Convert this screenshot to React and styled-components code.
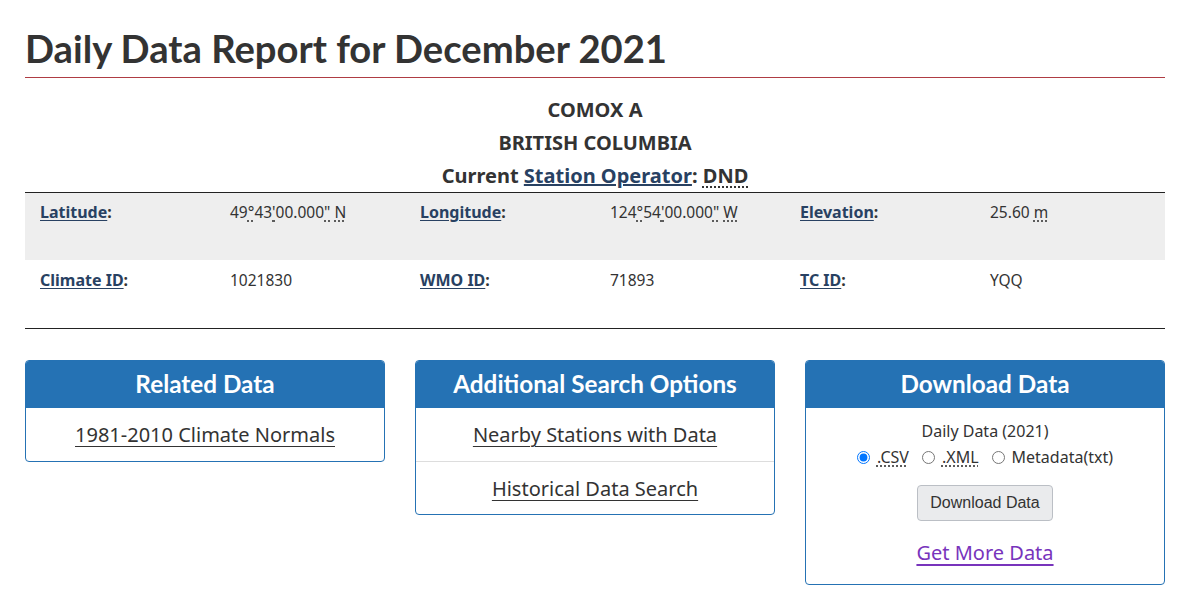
import React from "react";
import styled, { createGlobalStyle } from "styled-components";

const Global = createGlobalStyle`
  html, body { margin: 0; padding: 0; background: #fff; }
  body { font-family: "Noto Sans", "Open Sans", sans-serif; color: #333; font-size: 16px; }
  * { box-sizing: border-box; }
`;

const Page = styled.main`
  width: 1140px;
  margin: 0 0 0 25px;
  padding-top: 27px;
`;

const Title = styled.h1`
  margin: 0;
  font-family: Lato, "Noto Sans", sans-serif;
  font-weight: 700;
  font-size: 38.2px;
  line-height: 42px;
  color: #333;
  padding-bottom: 8px;
  border-bottom: 1px solid #af3c43;
`;

const Station = styled.div`
  text-align: center;
  font-weight: 700;
  font-size: 20px;
  padding-top: 15px;
`;

const StationLine = styled.div`
  height: 33px;
  line-height: 34px;
`;

const NavLink = styled.a`
  color: #284162;
  text-decoration: underline;
`;

const Abbr = styled.abbr`
  text-decoration: underline dotted;
  text-underline-offset: 3px;
  cursor: help;
`;

const InfoTable = styled.div`
  border-top: 1px solid #222;
  border-bottom: 1px solid #222;
`;

const InfoRow = styled.div`
  display: grid;
  grid-template-columns: repeat(6, 190px);
  height: ${(p) => p.$h}px;
  background: ${(p) => (p.$shade ? "#eeeeee" : "#fff")};
  padding-top: ${(p) => p.$pt}px;
`;

const Label = styled.div`
  padding-left: 15px;
  font-weight: 700;
  line-height: 23px;
  color: #333;
`;

const LabelAbbr = styled.abbr`
  color: #284162;
  text-decoration: underline;
  text-underline-offset: 2px;
`;

const Value = styled.div`
  padding-left: 15px;
  line-height: 23px;
  font-size: 15.5px;
`;

const Panels = styled.div`
  display: grid;
  grid-template-columns: repeat(3, 360px);
  column-gap: 30px;
  align-items: start;
  margin-top: 31px;
`;

const Panel = styled.section`
  border: 1px solid #2572b4;
  border-radius: 4px;
  overflow: hidden;
`;

const PanelHead = styled.h2`
  margin: 0;
  background: #2572b4;
  color: #fff;
  font-family: Lato, "Noto Sans", sans-serif;
  font-weight: 700;
  font-size: 24.3px;
  height: 47px;
  line-height: 46px;
  text-align: center;
`;

const ListItem = styled.div`
  text-align: center;
  height: ${(p) => p.$h || 53}px;
  line-height: ${(p) => p.$h || 53}px;
  font-size: 20px;
  border-top: ${(p) => (p.$sep ? "1px solid #ddd" : "none")};
`;

const PlainLink = styled.a`
  color: #333;
  text-decoration: underline;
  text-underline-offset: 4px;
  text-decoration-thickness: 1px;
`;

const DownloadBody = styled.div`
  display: flex;
  flex-direction: column;
  align-items: center;
  padding-top: 12px;
  height: 176px;
`;

const Small = styled.div`
  font-size: 16px;
  line-height: 23px;
`;

const Radios = styled.div`
  display: flex;
  gap: 13px;
  font-size: 16px;
  line-height: 23px;
  margin-top: 3px;
`;

const RadioLabel = styled.label`
  display: flex;
  align-items: center;
  gap: 7px;
`;

const Radio = styled.input`
  margin: 0;
  width: 13px;
  height: 13px;
`;

const Button = styled.button`
  margin-top: 16px;
  font-family: "Liberation Sans", Arial, sans-serif;
  font-size: 16px;
  color: #333;
  background: #eaebed;
  border: 1px solid #bbbfc5;
  border-radius: 4px;
  width: 136px;
  height: 36px;
  padding: 0;
`;

const MoreLink = styled.a`
  margin-top: 18px;
  font-size: 20px;
  color: #7834bc;
  text-decoration: underline;
  text-underline-offset: 4px;
`;

const Coord = ({ d, m, dir }) => (
  <>
    {d}
    <Abbr title="degrees">°</Abbr>
    {m}
    <Abbr title="minutes">'</Abbr>
    00.000
    <Abbr title="seconds">"</Abbr> <Abbr title={dir === "N" ? "North" : "West"}>{dir}</Abbr>
  </>
);

export default function App() {
  return (
    <>
      <Global />
      <Page>
        <Title>Daily Data Report for December 2021</Title>
        <Station>
          <StationLine>COMOX A</StationLine>
          <StationLine>BRITISH COLUMBIA</StationLine>
          <StationLine>
            Current <NavLink href="#">Station Operator</NavLink>:{" "}
            <Abbr title="Department of National Defence">DND</Abbr>
          </StationLine>
        </Station>
        <InfoTable>
          <InfoRow $shade $h={67} $pt={8}>
            <Label><LabelAbbr>Latitude</LabelAbbr>:</Label>
            <Value><Coord d="49" m="43" dir="N" /></Value>
            <Label><LabelAbbr>Longitude</LabelAbbr>:</Label>
            <Value><Coord d="124" m="54" dir="W" /></Value>
            <Label><LabelAbbr>Elevation</LabelAbbr>:</Label>
            <Value>25.60 <Abbr title="metres">m</Abbr></Value>
          </InfoRow>
          <InfoRow $h={68} $pt={9}>
            <Label><LabelAbbr>Climate ID</LabelAbbr>:</Label>
            <Value>1021830</Value>
            <Label><LabelAbbr>WMO ID</LabelAbbr>:</Label>
            <Value>71893</Value>
            <Label><LabelAbbr>TC ID</LabelAbbr>:</Label>
            <Value>YQQ</Value>
          </InfoRow>
        </InfoTable>
        <Panels>
          <Panel>
            <PanelHead>Related Data</PanelHead>
            <ListItem><PlainLink href="#">1981-2010 Climate Normals</PlainLink></ListItem>
          </Panel>
          <Panel>
            <PanelHead>Additional Search Options</PanelHead>
            <ListItem><PlainLink href="#">Nearby Stations with Data</PlainLink></ListItem>
            <ListItem $sep><PlainLink href="#">Historical Data Search</PlainLink></ListItem>
          </Panel>
          <Panel>
            <PanelHead>Download Data</PanelHead>
            <DownloadBody>
              <Small>Daily Data (2021)</Small>
              <Radios>
                <RadioLabel><Radio type="radio" name="fmt" defaultChecked /><Abbr title="Comma Separated Values">.CSV</Abbr></RadioLabel>
                <RadioLabel><Radio type="radio" name="fmt" /><Abbr title="Extensible Markup Language">.XML</Abbr></RadioLabel>
                <RadioLabel><Radio type="radio" name="fmt" />Metadata(txt)</RadioLabel>
              </Radios>
              <Button>Download Data</Button>
              <MoreLink href="#">Get More Data</MoreLink>
            </DownloadBody>
          </Panel>
        </Panels>
      </Page>
    </>
  );
}
